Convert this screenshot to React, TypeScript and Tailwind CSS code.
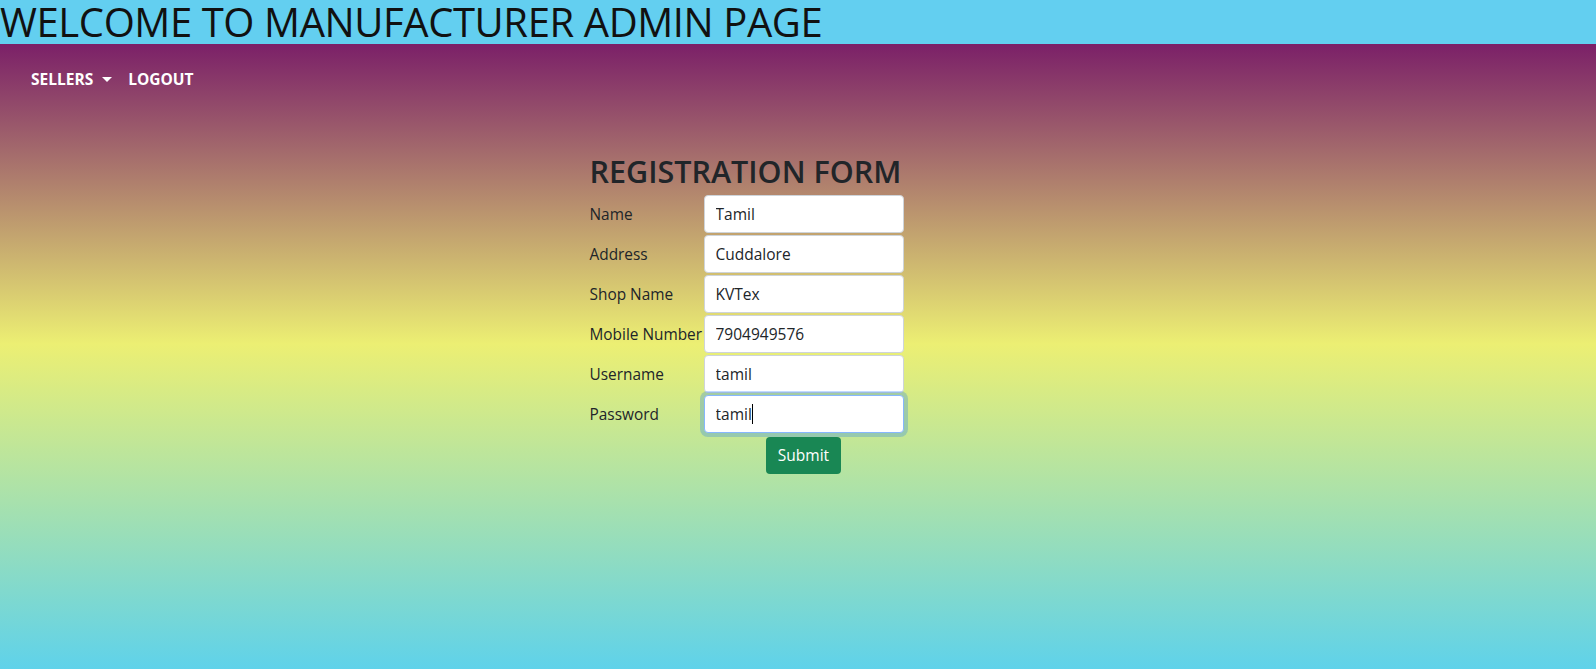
import React, { useState } from "react";

const fields = [
  { label: "Name", value: "Tamil" },
  { label: "Address", value: "Cuddalore" },
  { label: "Shop Name", value: "KVTex" },
  { label: "Mobile Number", value: "7904949576" },
  { label: "Username", value: "tamil" },
  { label: "Password", value: "tamil", focused: true },
];

export default function App() {
  const [values, setValues] = useState(fields.map((f) => f.value));

  return (
    <div className="min-h-screen flex flex-col font-['Open_Sans',sans-serif] text-[#212529]">
      {/* Top banner */}
      <header className="h-[44px] bg-[#63cff0] flex items-center">
        <h1 className="text-[40px] leading-[44px] font-normal text-[#111] tracking-[-0.4px] whitespace-nowrap">
          WELCOME TO MANUFACTURER ADMIN PAGE
        </h1>
      </header>

      {/* Gradient body */}
      <main className="flex-1 bg-[linear-gradient(to_bottom,#7b2068_0%,#ecef73_48%,#5fd2ea_100%)] pb-[190px]">
        <nav className="flex items-center gap-4 px-[31px] pt-[24px] pb-[20px]">
          <button className="flex items-center gap-[9px] text-white font-bold text-[15.5px]">
            SELLERS
            <span className="w-0 h-0 border-l-[5px] border-r-[5px] border-t-[5px] border-l-transparent border-r-transparent border-t-white" />
          </button>
          <button className="text-white font-bold text-[15.5px]">LOGOUT</button>
        </nav>

        <div className="flex justify-center mt-[40px]">
          <form className="w-[314px] -ml-[103px]" onSubmit={(e) => e.preventDefault()}>
            <h2 className="text-[30.5px] leading-[40px] font-semibold text-[#212529] mb-[4px] whitespace-nowrap">
              REGISTRATION FORM
            </h2>
            <div className="grid grid-cols-[114px_200px] gap-y-[2px]">
              {fields.map((f, i) => (
                <React.Fragment key={f.label}>
                  <label className="text-[15.4px] flex items-center text-[#212529] whitespace-nowrap">
                    {f.label}
                  </label>
                  <div className="relative">
                    <input
                      type="text"
                      value={values[i]}
                      onChange={(e) => {
                        const next = [...values];
                        next[i] = e.target.value;
                        setValues(next);
                      }}
                      className={
                        f.focused
                          ? "h-[38px] w-full rounded-[4px] bg-white px-[11px] text-[15.5px] text-[#212529] caret-transparent border border-[#86b7fe] outline-none shadow-[0_0_0_4px_rgba(13,110,253,0.25)]"
                          : "h-[38px] w-full rounded-[4px] bg-white px-[11px] text-[15.5px] text-[#212529] border border-[#ced4da] outline-none"
                      }
                    />
                    {f.focused && (
                      <span className="absolute left-[48px] top-[9px] w-px h-[20px] bg-black pointer-events-none" />
                    )}
                  </div>
                </React.Fragment>
              ))}
              <div />
              <div className="flex justify-center pt-[2px]">
                <button
                  type="submit"
                  className="h-[37px] px-[12px] rounded-[4px] bg-[#198754] text-white text-[15.5px]"
                >
                  Submit
                </button>
              </div>
            </div>
          </form>
        </div>
      </main>
    </div>
  );
}
